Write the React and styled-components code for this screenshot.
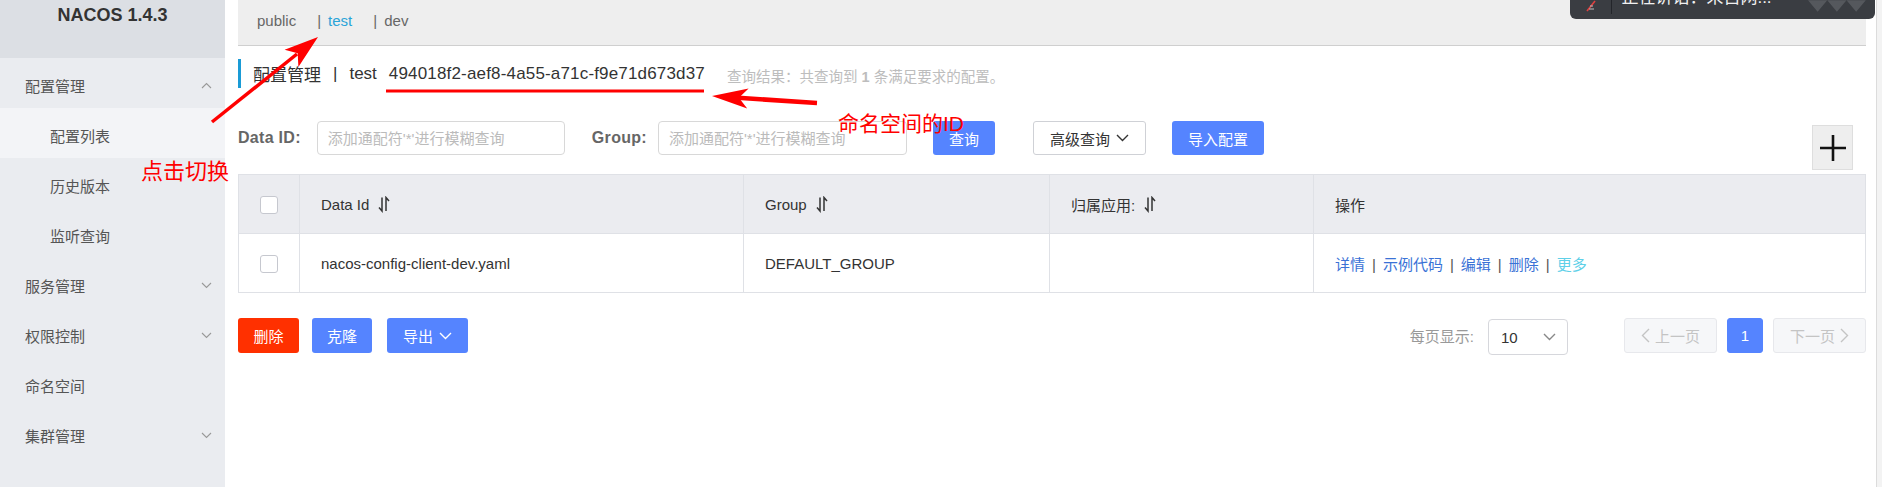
import React from 'react';
import styled, { createGlobalStyle } from 'styled-components';

const Global = createGlobalStyle`
  html, body { margin: 0; padding: 0; background: #fff; }
  body { font-family: "Liberation Sans", "Noto Sans CJK SC", sans-serif; color: #333; }
  * { box-sizing: border-box; }
`;

const FONT = `"Liberation Sans", "Noto Sans CJK SC", sans-serif`;

const Page = styled.div`
  position: relative;
  display: flex;
  width: 1882px;
  height: 487px;
  overflow: hidden;
  background: #fff;
`;

/* ---------- sidebar ---------- */
const Sidebar = styled.aside`
  width: 225px;
  flex: none;
  background: #eaecf0;
  display: flex;
  flex-direction: column;
`;
const Brand = styled.div`
  height: 58px;
  background: #dcdfe4;
  display: flex;
  justify-content: center;
  padding-top: 4px;
  font: bold 18px/22px ${FONT};
  color: #333;
`;
const MenuItem = styled.div`
  height: 50px;
  display: flex;
  align-items: center;
  justify-content: space-between;
  padding: 4px 13px 0 ${(p) => (p.$sub ? '50px' : '25px')};
  font-size: 15px;
  color: #555;
  background: ${(p) => (p.$active ? '#f3f4f7' : 'transparent')};
`;
const Chevron = ({ up }) => (
  <svg width="11" height="7" viewBox="0 0 11 7">
    <polyline
      points={up ? '1,6 5.5,1.5 10,6' : '1,1 5.5,5.5 10,1'}
      fill="none"
      stroke="#999"
      strokeWidth="1.1"
    />
  </svg>
);

/* ---------- main ---------- */
const Main = styled.main`
  flex: 1;
  min-width: 0;
  display: flex;
  flex-direction: column;
  padding: 0 10px 0 13px;
`;
const Scrollbar = styled.div`
  width: 6px;
  flex: none;
  background: #f3f3f3;
  border-left: 1px solid #dcdcdc;
`;

const NsBar = styled.nav`
  height: 46px;
  background: #eeeeee;
  border-bottom: 1px solid #cfcfcf;
  display: flex;
  align-items: center;
  padding: 0 0 4px 19px;
  font-size: 15px;
  color: #666;
`;
const NsLink = styled.span`
  margin-right: 21px;
  color: ${(p) => (p.$active ? '#2aa4d8' : '#666')};
`;
const NsSep = styled.span`
  margin-right: 7px;
  color: #666;
`;

const TitleRow = styled.div`
  margin-top: 13px;
  height: 29px;
  border-left: 3px solid #1a9bd6;
  padding-left: 12px;
  display: flex;
  align-items: center;
  font-size: 17px;
  color: #333;
`;
const TitleSep = styled.span`
  margin: 0 12px;
`;
const NsId = styled.span`
  margin-left: 12px;
  letter-spacing: 0.17px;
`;
const ResultText = styled.span`
  margin-left: 22px;
  margin-top: 4px;
  font-size: 14.5px;
  color: #bdbdbd;
  b { font-weight: bold; }
`;

const Toolbar = styled.div`
  margin-top: 33px;
  display: flex;
  align-items: flex-start;
`;
const Label = styled.label`
  font: bold 16px/34px ${FONT};
  letter-spacing: 0.3px;
  color: #666;
  margin-right: ${(p) => p.$gap}px;
`;
const Input = styled.input`
  width: ${(p) => p.$w}px;
  height: 34px;
  border: 1px solid #d8d8d8;
  border-radius: 4px;
  padding: 0 10px;
  font: 15px ${FONT};
  color: #333;
  margin-right: ${(p) => p.$gap}px;
  outline: none;
  &::placeholder { color: #bbb; }
`;
const Button = styled.button`
  height: ${(p) => p.$h || 34}px;
  width: ${(p) => p.$w}px;
  margin-left: ${(p) => p.$ml || 0}px;
  border-radius: 3px;
  border: 1px solid ${(p) => (p.$kind === 'normal' ? '#cfd1d6' : 'transparent')};
  background: ${(p) =>
    p.$kind === 'danger' ? '#ff3000' : p.$kind === 'normal' ? '#fff' : '#5584ff'};
  color: ${(p) => (p.$kind === 'normal' ? '#333' : '#fff')};
  font: 15px ${FONT};
  display: inline-flex;
  align-items: center;
  justify-content: center;
  gap: 6px;
  padding: 0;
  flex: none;
`;
const PlusButton = styled.div`
  margin-left: auto;
  margin-right: 13px;
  margin-top: 4px;
  width: 41px;
  height: 45px;
  background: #eeeeee;
  border: 1px solid #dedede;
  display: flex;
  align-items: center;
  justify-content: center;
`;

/* ---------- table ---------- */
const Table = styled.table`
  margin-top: 4px;
  width: 100%;
  border-collapse: collapse;
  table-layout: fixed;
  font-size: 15px;
  color: #333;
`;
const Th = styled.th`
  height: 59px;
  background: #ebecf0;
  border: 1px solid #dfe1e6;
  text-align: ${(p) => (p.$center ? 'center' : 'left')};
  font-weight: normal;
  padding: 0 0 0 ${(p) => (p.$center ? 0 : 21)}px;
`;
const Td = styled.td`
  height: 59px;
  border: 1px solid #dfe1e6;
  text-align: ${(p) => (p.$center ? 'center' : 'left')};
  padding: 0 0 0 ${(p) => (p.$center ? 0 : 21)}px;
`;
const HeadCell = styled.span`
  display: inline-flex;
  align-items: center;
  gap: 9px;
`;
const Checkbox = styled.span`
  display: inline-block;
  vertical-align: middle;
  width: 18px;
  height: 18px;
  border: 1px solid #c6c8cf;
  border-radius: 3px;
  background: #fff;
`;
const ActionLink = styled.span`
  color: ${(p) => (p.$light ? '#5fd0e8' : '#3a72d6')};
`;
const ActionSep = styled.span`
  color: #555;
  margin: 0 7px;
`;

const SortIcon = () => (
  <svg width="12" height="17" viewBox="0 0 12 17">
    <path d="M4 1.5 V15 L1 11.5" fill="none" stroke="#333" strokeWidth="1.5" />
    <path d="M8 15 V1.5 L11 5" fill="none" stroke="#333" strokeWidth="1.5" />
  </svg>
);

/* ---------- bottom ---------- */
const BottomRow = styled.div`
  margin-top: 23px;
  display: flex;
  align-items: center;
`;
const Pager = styled.div`
  margin-left: auto;
  display: flex;
  align-items: center;
`;
const PagerLabel = styled.span`
  font-size: 15px;
  color: #999;
  margin-right: 14px;
`;
const Select = styled.div`
  width: 80px;
  height: 36px;
  margin-top: 3px;
  border: 1px solid #d6d7dc;
  border-radius: 4px;
  display: flex;
  align-items: center;
  justify-content: space-between;
  padding: 0 11px 0 12px;
  font-size: 15px;
  color: #333;
`;
const PageButton = styled.div`
  height: 35px;
  width: ${(p) => p.$w}px;
  margin-left: ${(p) => p.$ml}px;
  border-radius: 3px;
  display: flex;
  align-items: center;
  justify-content: center;
  gap: 5px;
  font-size: 15px;
  background: ${(p) => (p.$current ? '#5584ff' : '#f6f7f9')};
  border: 1px solid ${(p) => (p.$current ? '#5584ff' : '#e7e8ec')};
  color: ${(p) => (p.$current ? '#fff' : '#c4c4c4')};
`;

const ChevronDown = ({ color = '#333', w = 13 }) => (
  <svg width={w} height="8" viewBox="0 0 13 8">
    <polyline points="1,1 6.5,6.5 12,1" fill="none" stroke={color} strokeWidth="1.4" />
  </svg>
);
const ChevronSide = ({ left }) => (
  <svg width="9" height="15" viewBox="0 0 9 15">
    <polyline
      points={left ? '8,1 1.5,7.5 8,14' : '1,1 7.5,7.5 1,14'}
      fill="none"
      stroke="#c4c4c4"
      strokeWidth="1.4"
    />
  </svg>
);

/* ---------- overlays ---------- */
const Overlay = styled.svg`
  position: absolute;
  left: 0;
  top: 0;
  pointer-events: none;
`;
const Note = styled.span`
  position: absolute;
  left: ${(p) => p.$x}px;
  top: ${(p) => p.$y}px;
  font: ${(p) => p.$size}px/1 ${FONT};
  color: #ff0000;
  white-space: nowrap;
`;
const Toast = styled.div`
  position: absolute;
  left: 1570px;
  top: 0;
  width: 305px;
  height: 19px;
  background: #3a3d42;
  border-radius: 0 0 6px 6px;
  overflow: hidden;
  display: flex;
  align-items: flex-start;
`;
const ToastIcon = styled.div`
  width: 44px;
  height: 14px;
  border-right: 1px solid #23252a;
  display: flex;
  justify-content: center;
`;
const ToastText = styled.span`
  margin: -11px 0 0 9px;
  font: 17px/1 ${FONT};
  color: #f0f0f0;
  white-space: nowrap;
`;

export default function App() {
  return (
    <Page>
      <Global />
      <Sidebar>
        <Brand>NACOS 1.4.3</Brand>
        <MenuItem>配置管理<Chevron up /></MenuItem>
        <MenuItem $sub $active>配置列表</MenuItem>
        <MenuItem $sub>历史版本</MenuItem>
        <MenuItem $sub>监听查询</MenuItem>
        <MenuItem>服务管理<Chevron /></MenuItem>
        <MenuItem>权限控制<Chevron /></MenuItem>
        <MenuItem>命名空间</MenuItem>
        <MenuItem>集群管理<Chevron /></MenuItem>
      </Sidebar>

      <Main>
        <NsBar>
          <NsLink>public</NsLink>
          <NsSep>|</NsSep>
          <NsLink $active>test</NsLink>
          <NsSep>|</NsSep>
          <NsLink>dev</NsLink>
        </NsBar>

        <TitleRow>
          配置管理<TitleSep>|</TitleSep>test
          <NsId>494018f2-aef8-4a55-a71c-f9e71d673d37</NsId>
          <ResultText>
            查询结果：共查询到 <b>1</b> 条满足要求的配置。
          </ResultText>
        </TitleRow>

        <Toolbar>
          <Label $gap={16}>Data ID:</Label>
          <Input $w={248} $gap={27} placeholder="添加通配符'*'进行模糊查询" />
          <Label $gap={11}>Group:</Label>
          <Input $w={249} $gap={26} placeholder="添加通配符'*'进行模糊查询" />
          <Button $w={62}>查询</Button>
          <Button $w={113} $ml={38} $kind="normal">
            高级查询 <ChevronDown />
          </Button>
          <Button $w={92} $ml={26}>导入配置</Button>
          <PlusButton>
            <svg width="26" height="28" viewBox="0 0 26 28">
              <path d="M13 1 V27 M0 14 H26" stroke="#111" strokeWidth="2.6" />
            </svg>
          </PlusButton>
        </Toolbar>

        <Table>
          <colgroup>
            <col style={{ width: 61 }} />
            <col style={{ width: 444 }} />
            <col style={{ width: 306 }} />
            <col style={{ width: 264 }} />
            <col />
          </colgroup>
          <thead>
            <tr>
              <Th $center><Checkbox /></Th>
              <Th><HeadCell>Data Id <SortIcon /></HeadCell></Th>
              <Th><HeadCell>Group <SortIcon /></HeadCell></Th>
              <Th><HeadCell>归属应用: <SortIcon /></HeadCell></Th>
              <Th>操作</Th>
            </tr>
          </thead>
          <tbody>
            <tr>
              <Td $center><Checkbox /></Td>
              <Td>nacos-config-client-dev.yaml</Td>
              <Td>DEFAULT_GROUP</Td>
              <Td />
              <Td>
                <ActionLink>详情</ActionLink>
                <ActionSep>|</ActionSep>
                <ActionLink>示例代码</ActionLink>
                <ActionSep>|</ActionSep>
                <ActionLink>编辑</ActionLink>
                <ActionSep>|</ActionSep>
                <ActionLink>删除</ActionLink>
                <ActionSep>|</ActionSep>
                <ActionLink $light>更多</ActionLink>
              </Td>
            </tr>
          </tbody>
        </Table>

        <BottomRow>
          <Button $h={35} $w={61} $kind="danger">删除</Button>
          <Button $h={35} $w={60} $ml={13}>克隆</Button>
          <Button $h={35} $w={81} $ml={15}>
            导出 <ChevronDown color="#fff" />
          </Button>
          <Pager>
            <PagerLabel>每页显示:</PagerLabel>
            <Select>
              10 <ChevronDown color="#888" />
            </Select>
            <PageButton $w={93} $ml={56}>
              <ChevronSide left /> 上一页
            </PageButton>
            <PageButton $w={36} $ml={10} $current>1</PageButton>
            <PageButton $w={93} $ml={10}>
              下一页 <ChevronSide />
            </PageButton>
          </Pager>
        </BottomRow>
      </Main>
      <Scrollbar />

      <Toast>
        <ToastIcon>
          <svg width="16" height="12" viewBox="0 0 16 12">
            <path d="M4 11 L12 1" stroke="#e04040" strokeWidth="1.6" />
            <path d="M6 9 H11 M7 6 H10" stroke="#bbb" strokeWidth="1.2" />
          </svg>
        </ToastIcon>
        <ToastText>正在讲话：来自网...</ToastText>
        <svg width="70" height="14" viewBox="0 0 70 14" style={{ marginLeft: 36 }}>
          <path d="M0 0 L10 12 L20 0 L30 12 L40 0 L50 12 L60 0 Z" fill="#55585d" />
        </svg>
      </Toast>

      <Overlay width="1882" height="487" viewBox="0 0 1882 487">
        {/* arrow to "test" */}
        <line x1="212" y1="122" x2="297" y2="54" stroke="#ff0000" strokeWidth="3.5" />
        <polygon points="318,37 298.4,66.9 297.7,53.3 284.6,49.7" fill="#ff0000" />
        {/* underline of ID */}
        <rect x="386" y="89.5" width="318" height="3" fill="#ff0000" />
        {/* arrow to ID */}
        <line x1="817" y1="103" x2="738" y2="97.8" stroke="#ff0000" strokeWidth="4.5" />
        <polygon points="712,96 748.6,88.4 738.9,97.8 747.2,108.4" fill="#ff0000" />
      </Overlay>
      <Note $x={141} $y={161} $size={22}>点击切换</Note>
      <Note $x={838} $y={113} $size={21}>命名空间的ID</Note>
    </Page>
  );
}
